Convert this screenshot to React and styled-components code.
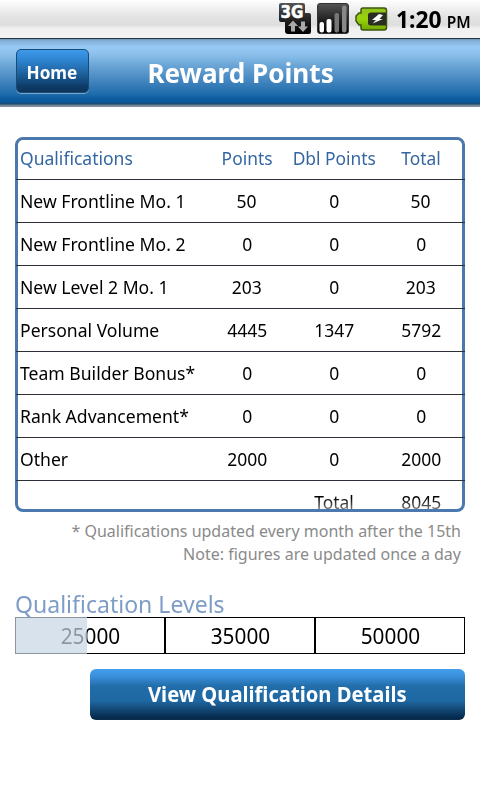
import React from 'react';
import styled, { createGlobalStyle } from 'styled-components';

const GlobalStyle = createGlobalStyle`
  body {
    margin: 0;
    background: #fff;
    color: #000;
    font-family: 'Noto Sans', 'Open Sans', sans-serif;
  }
  * {
    box-sizing: border-box;
  }
`;

const Screen = styled.div`
  width: 480px;
  height: 800px;
  overflow: hidden;
  background: #fff;
`;

const StatusBar = styled.div`
  display: flex;
  align-items: center;
  justify-content: flex-end;
  height: 38px;
  padding-right: 9px;
  background: linear-gradient(#fff 0%, #e4e4e4 42%, #dedede 65%, #f1f0f0 75%, #f4f3f3 100%);
`;

const StatusIcons = styled.svg`
  display: block;
  width: 112px;
  height: 38px;
  margin-right: 6px;
`;

/* Scales the text on its own line box to a narrower or wider set. */
const Label = styled.span`
  display: inline-block;
  flex: none;
  white-space: nowrap;
  transform: scaleX(${props => props.$stretch || 1});
  transform-origin: ${props => props.$origin || 'center'};
`;

const Clock = styled.div`
  display: flex;
  align-items: baseline;
  justify-content: space-between;
  width: 75px;
  font-weight: 700;
  font-size: 24px;
  line-height: 38px;
  white-space: nowrap;
  padding-top: 2px;

  small {
    font-size: 16px;
    font-weight: 600;
  }
`;

const Header = styled.header`
  display: flex;
  align-items: center;
  height: 69px;
  padding: 0 16px 2px;
  border-top: 1px solid #1c3547;
  background: linear-gradient(
    #7593ab 0px, #84b3da 2px, #96c9f5 8px, #8dc1ec 15px, #69a4d5 27px,
    #4083bd 43px, #1e6cab 55px, #0b5b9e 60px, #0c5b9f 63px,
    #164c78 64px, #164c78 65px, #6b7f90 66px, #8f9aa4 68px
  );
`;

const HomeButton = styled.button`
  width: 73px;
  height: 44px;
  margin-top: -2px;
  padding: 2px 1px 0 0;
  border: 1px solid #174b78;
  border-radius: 5px;
  background: linear-gradient(#3e9aec 0%, #2c80cb 28%, #1c5c96 60%, #0d3a66 88%, #0f3558 100%);
  box-shadow: 0 1px 0 #78a7cd;
  color: #fff;
  font: 700 17.5px/24px 'Noto Sans', 'Open Sans', sans-serif;
  display: flex;
  align-items: center;
  justify-content: center;
`;

const Title = styled.h1`
  margin: 1px 0 0 58px;
  width: 187px;
  display: flex;
  justify-content: center;
  color: #fff;
  font-size: 26.5px;
  font-weight: 700;
  line-height: 36px;
`;

const Content = styled.main`
  padding: 30px 15px 0;
`;

const Panel = styled.div`
  height: 375px;
  border: 3px solid #4b79ae;
  border-radius: 8px;
`;

const Row = styled.div`
  display: grid;
  grid-template-columns: 187.5px 87px 87px 87px;
  align-items: center;
  height: ${props => props.$height || 43}px;
  margin: 0 -3px 0 -2px;
  padding-bottom: ${props => (props.$head ? 4 : 0)}px;
  border-bottom: ${props => (props.$last ? 'none' : '1px solid #2b2f3a')};
  overflow: ${props => (props.$last ? 'hidden' : 'visible')};
  color: ${props => (props.$head ? '#3566a1' : '#000')};
  font-size: 18.5px;
  line-height: ${props => (props.$head ? 35 : 42)}px;
`;

const TotalRow = styled(Row)`
  align-items: start;
  -webkit-mask-image: linear-gradient(#000 60%, rgba(0, 0, 0, 0.55) 100%);
  mask-image: linear-gradient(#000 60%, rgba(0, 0, 0, 0.55) 100%);
`;

const Name = styled.div`
  padding-left: 4px;
`;

const Value = styled.div`
  display: flex;
  justify-content: center;
`;

const Notes = styled.div`
  padding: 8px 4px 0 0;
  color: #8a8a8a;
  font-size: 16px;
  line-height: 23px;
  text-align: right;
`;

const SectionTitle = styled.h2`
  margin: 24px 0 -1px;
  color: #7d9dc6;
  font-size: 24px;
  font-weight: 400;
  line-height: 28px;
`;

const Levels = styled.div`
  position: relative;
  display: flex;
  height: 37px;
`;

const Level = styled.div`
  display: flex;
  align-items: center;
  justify-content: center;
  width: 150px;
  padding: 0 0 1px;
  border: 1px solid #000;
  font-size: 22px;
  line-height: 33px;
`;

const Progress = styled.div`
  position: absolute;
  top: 0;
  left: 0;
  bottom: 0;
  background: rgba(200, 214, 229, 0.7);
`;

const DetailsButton = styled.button`
  display: flex;
  align-items: center;
  justify-content: center;
  width: 375px;
  height: 51px;
  margin: 15px 0 0 75px;
  padding: 0 1px 1px 0;
  border: none;
  border-radius: 6px;
  background: linear-gradient(#439de9 0%, #3c93df 12%, #226da9 34%, #1e68a3 62%, #164e7e 76%, #04294c 96%, #0d2c49 100%);
  color: #fff;
  font: 700 20.5px/28px 'Noto Sans', 'Open Sans', sans-serif;
`;

const columns = ['Points', 'Dbl Points', 'Total'];

const rows = [
  ['New Frontline Mo. 1', 50, 0, 50],
  ['New Frontline Mo. 2', 0, 0, 0],
  ['New Level 2 Mo. 1', 203, 0, 203],
  ['Personal Volume', 4445, 1347, 5792],
  ['Team Builder Bonus*', 0, 0, 0],
  ['Rank Advancement*', 0, 0, 0],
  ['Other', 2000, 0, 2000],
];

const levels = [25000, 35000, 50000];

// share of the whole level bar that is filled
const progress = 71.5 / 450;

function Icons() {
  return (
    <StatusIcons viewBox="278 0 112 38">
      <defs>
        <linearGradient id="dark" x1="0" y1="0" x2="0" y2="1">
          <stop offset="0" stopColor="#555" />
          <stop offset="0.6" stopColor="#1c1c1c" />
          <stop offset="1" stopColor="#000" />
        </linearGradient>
        <linearGradient id="green" x1="0" y1="0" x2="0" y2="1">
          <stop offset="0" stopColor="#8fc31b" />
          <stop offset="0.5" stopColor="#9ad30c" />
          <stop offset="1" stopColor="#6fa800" />
        </linearGradient>
      </defs>
      <path d="M281 3H303Q305 3 305 5V13H309Q311 13 311 15V32Q311 34 309 34H288Q285 34 285 31V22H281Q279 22 279 20V5Q279 3 281 3Z" fill="url(#dark)" />
      <text x="280.5" y="18" fill="#fff" stroke="#fff" strokeWidth="0.5" fontFamily="DejaVu Sans" fontWeight="700" fontSize="17" textLength="23" lengthAdjust="spacingAndGlyphs">3G</text>
      <path d="M293 20.5L298 26H295V31.5H291V26H288ZM303 32L298 26.5H301V21.5H305V26.5H308Z" fill="#a9a9a9" />
      <rect x="317.5" y="3.5" width="31" height="30" rx="2.5" fill="url(#dark)" stroke="#333" />
      <rect x="319.5" y="22" width="4.5" height="10.5" rx="2" fill="#fff" />
      <rect x="326.5" y="19" width="5" height="13.5" rx="2" fill="#fff" />
      <rect x="334.5" y="13" width="4.5" height="19.5" rx="2" fill="#777" />
      <rect x="342" y="5.5" width="4.5" height="27" rx="2" fill="#888" />
      <path d="M363 8H384Q386.5 8 386.5 10.5V27.5Q386.5 30 384 30H363Q361 30 361 28V25H359L356 21V16L359 13H361V10Q361 8 363 8Z" fill="url(#green)" stroke="#3c5511" strokeWidth="1.5" />
      <path d="M371 12.5H386V25.5H371Q368 25.5 368 23V15Q368 12.5 371 12.5Z" fill="#2a2d22" />
      <path d="M379 14L372 20H376L372.5 23.5L383 19H379.5L383 15Z" fill="#fff" />
    </StatusIcons>
  );
}

function App() {
  return (
    <>
      <GlobalStyle />
      <Screen>
        <StatusBar>
          <Icons />
          <Clock>
            <Label $stretch={0.95} $origin="left">1:20</Label>
            <small><Label $stretch={0.97} $origin="right">PM</Label></small>
          </Clock>
        </StatusBar>
        <Header>
          <HomeButton><Label $stretch={0.98}>Home</Label></HomeButton>
          <Title><Label $stretch={0.985}>Reward Points</Label></Title>
        </Header>
        <Content>
          <Panel>
            <Row $head $height={40}>
              <Name><Label $stretch={0.947} $origin="left">Qualifications</Label></Name>
              {columns.map(name => (
                <Value key={name}><Label $stretch={0.94}>{name}</Label></Value>
              ))}
            </Row>
            {rows.map(([name, ...values]) => (
              <Row key={name}>
                <Name><Label $stretch={0.95} $origin="left">{name}</Label></Name>
                {values.map((value, i) => (
                  <Value key={i}><Label $stretch={0.945}>{value}</Label></Value>
                ))}
              </Row>
            ))}
            <TotalRow $last $height={28}>
              <Name />
              <Value />
              <Value><Label $stretch={0.94}>Total</Label></Value>
              <Value><Label $stretch={0.945}>8045</Label></Value>
            </TotalRow>
          </Panel>
          <Notes>
            <div><Label $origin="right">* Qualifications updated every month after the 15th</Label></div>
            <div><Label $origin="right">Note: figures are updated once a day</Label></div>
          </Notes>
          <SectionTitle><Label $stretch={0.96} $origin="left">Qualification Levels</Label></SectionTitle>
          <Levels>
            {levels.map(level => (
              <Level key={level}><Label $stretch={0.945}>{level}</Label></Level>
            ))}
            <Progress style={{ width: `${progress * 100}%` }} />
          </Levels>
          <DetailsButton><Label $stretch={0.985}>View Qualification Details</Label></DetailsButton>
        </Content>
      </Screen>
    </>
  );
}

export default App;
